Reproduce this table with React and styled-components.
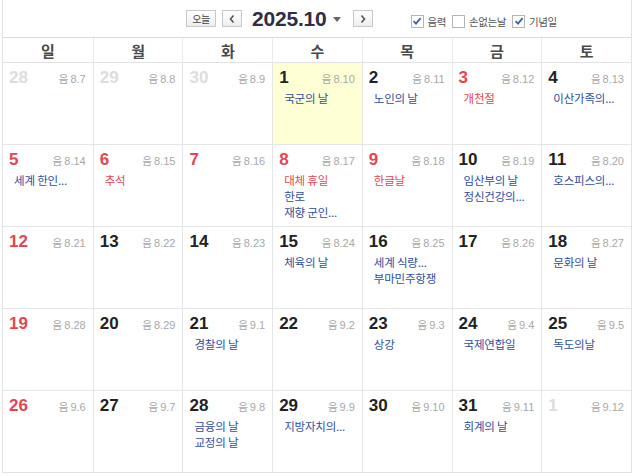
import React from "react";
import styled, { createGlobalStyle } from "styled-components";

const GlobalStyle = createGlobalStyle`
  body {
    margin: 0;
    background: #fff;
    font-family: "Liberation Sans", "Noto Sans CJK KR", Arial, sans-serif;
  }
`;

const weekdays = ["일", "월", "화", "수", "목", "금", "토"];

// tone: dim | red | normal ; today flag ; events [text, red]
const weeks = [
  [
    { d: 28, l: "8.7", tone: "dim" },
    { d: 29, l: "8.8", tone: "dim" },
    { d: 30, l: "8.9", tone: "dim" },
    { d: 1, l: "8.10", today: true, ev: [["국군의 날"]] },
    { d: 2, l: "8.11", ev: [["노인의 날"]] },
    { d: 3, l: "8.12", tone: "red", ev: [["개천절", true]] },
    { d: 4, l: "8.13", ev: [["이산가족의..."]] },
  ],
  [
    { d: 5, l: "8.14", tone: "red", ev: [["세계 한인..."]] },
    { d: 6, l: "8.15", tone: "red", ev: [["추석", true]] },
    { d: 7, l: "8.16", tone: "red" },
    { d: 8, l: "8.17", tone: "red", ev: [["대체 휴일", true], ["한로"], ["재향 군인..."]] },
    { d: 9, l: "8.18", tone: "red", ev: [["한글날", true]] },
    { d: 10, l: "8.19", ev: [["임산부의 날"], ["정신건강의..."]] },
    { d: 11, l: "8.20", ev: [["호스피스의..."]] },
  ],
  [
    { d: 12, l: "8.21", tone: "red" },
    { d: 13, l: "8.22" },
    { d: 14, l: "8.23" },
    { d: 15, l: "8.24", ev: [["체육의 날"]] },
    { d: 16, l: "8.25", ev: [["세계 식량..."], ["부마민주항쟁"]] },
    { d: 17, l: "8.26" },
    { d: 18, l: "8.27", ev: [["문화의 날"]] },
  ],
  [
    { d: 19, l: "8.28", tone: "red" },
    { d: 20, l: "8.29" },
    { d: 21, l: "9.1", ev: [["경찰의 날"]] },
    { d: 22, l: "9.2" },
    { d: 23, l: "9.3", ev: [["상강"]] },
    { d: 24, l: "9.4", ev: [["국제연합일"]] },
    { d: 25, l: "9.5", ev: [["독도의날"]] },
  ],
  [
    { d: 26, l: "9.6", tone: "red" },
    { d: 27, l: "9.7" },
    { d: 28, l: "9.8", ev: [["금융의 날"], ["교정의 날"]] },
    { d: 29, l: "9.9", ev: [["지방자치의..."]] },
    { d: 30, l: "9.10" },
    { d: 31, l: "9.11", ev: [["회계의 날"]] },
    { d: 1, l: "9.12", tone: "dim" },
  ],
];

function Check({ on, label }) {
  return (
    <Option>
      <Box>
        {on && (
          <svg width="10" height="10" viewBox="0 0 10 10">
            <path d="M1.5 5.2 L4 7.6 L8.6 2.2" fill="none" stroke="#3567a8" strokeWidth="1.8" />
          </svg>
        )}
      </Box>
      {label}
    </Option>
  );
}

export default function App() {
  return (
    <Frame>
      <GlobalStyle />
      <TopBar>
        <Nav>
          <SmallBtn>오늘</SmallBtn>
          <ArrowBtn>
            <svg width="8" height="10" viewBox="0 0 8 10">
              <path d="M5.5 1.5 L2.5 5 L5.5 8.5" fill="none" stroke="#555" strokeWidth="1.6" />
            </svg>
          </ArrowBtn>
          <Title>2025.10</Title>
          <Caret />
          <ArrowBtn $next>
            <svg width="8" height="10" viewBox="0 0 8 10">
              <path d="M2.5 1.5 L5.5 5 L2.5 8.5" fill="none" stroke="#555" strokeWidth="1.6" />
            </svg>
          </ArrowBtn>
        </Nav>
        <Options>
          <Check on label="음력" />
          <Check label="손없는날" />
          <Check on label="기념일" />
        </Options>
      </TopBar>
      <Grid>
        {weekdays.map((w) => (
          <DayHead key={w}>{w}</DayHead>
        ))}
        {weeks.flat().map((c, i) => (
          <Cell key={i} $today={c.today}>
            <CellTop>
              <DateNum $tone={c.tone}>{c.d}</DateNum>
              <Lunar>
                <LunarMark>음</LunarMark>
                {c.l}
              </Lunar>
            </CellTop>
            {c.ev && (
              <Events>
                {c.ev.map(([t, red], j) => (
                  <Event key={j} $red={red}>
                    {t}
                  </Event>
                ))}
              </Events>
            )}
          </Cell>
        ))}
      </Grid>
    </Frame>
  );
}

const Frame = styled.div`
  width: 628px;
  margin-left: 2px;
  border-left: 1px solid #e2e2e2;
  border-right: 1px solid #e2e2e2;
`;

const TopBar = styled.div`
  height: 37px;
  display: flex;
  align-items: center;
  border-bottom: 1px solid #dcdcdc;
  padding-left: 183px;
`;

const Nav = styled.div`
  display: flex;
  align-items: center;
`;

const BtnBase = styled.div`
  height: 15px;
  border: 1px solid #c8c8c8;
  background: linear-gradient(#ffffff, #eeeeee);
  display: flex;
  align-items: center;
  justify-content: center;
  box-sizing: content-box;
`;

const SmallBtn = styled(BtnBase)`
  width: 28px;
  font-size: 10px;
  color: #444;
  font-family: "Noto Sans CJK KR", sans-serif;
  letter-spacing: -0.5px;
`;

const ArrowBtn = styled(BtnBase)`
  width: 18px;
  margin-left: ${(p) => (p.$next ? "12px" : "6px")};
`;

const Title = styled.div`
  margin-left: 10px;
  font-size: 21px;
  font-weight: bold;
  color: #2e2e45;
  letter-spacing: -0.2px;
`;

const Caret = styled.div`
  margin-left: 6px;
  margin-top: 2px;
  width: 0;
  height: 0;
  border-left: 4px solid transparent;
  border-right: 4px solid transparent;
  border-top: 5px solid #666;
`;

const Options = styled.div`
  display: flex;
  align-items: center;
  gap: 6px;
  margin-left: 38px;
  margin-top: 5px;
`;

const Option = styled.div`
  display: flex;
  align-items: center;
  gap: 4px;
  font-family: "Noto Sans CJK KR", sans-serif;
  font-size: 10.5px;
  color: #555;
  letter-spacing: -0.4px;
`;

const Box = styled.div`
  width: 11px;
  height: 11px;
  border: 1px solid #b5b5b5;
  background: #fff;
  display: flex;
  align-items: center;
  justify-content: center;
`;

const Grid = styled.div`
  display: grid;
  grid-template-columns: repeat(7, 1fr);
  grid-template-rows: 25px 81px repeat(4, 82px);
  border-bottom: 1px solid #e2e2e2;
`;

const DayHead = styled.div`
  display: flex;
  align-items: center;
  justify-content: center;
  border-bottom: 1px solid #e2e2e2;
  border-left: 1px solid #eaeaea;
  &:first-child {
    border-left: none;
  }
  font-family: "Noto Sans CJK KR", sans-serif;
  font-weight: bold;
  font-size: 15px;
  color: #4a4a4a;
`;

const Cell = styled.div`
  border-left: 1px solid #e6e6e6;
  border-top: 1px solid #e6e6e6;
  &:nth-child(7n + 8) {
    border-left: none;
  }
  &:nth-child(-n + 14) {
    border-top: none;
  }
  background: ${(p) => (p.$today ? "#ffffd5" : "#fff")};
  padding: 6px 6px 0 6px;
  overflow: hidden;
`;

const CellTop = styled.div`
  display: flex;
  justify-content: space-between;
  align-items: center;
  height: 18px;
`;

const toneColor = { dim: "#dddddd", red: "#e5454f" };

const DateNum = styled.span`
  font-size: 17px;
  font-weight: bold;
  color: ${(p) => toneColor[p.$tone] || "#222"};
`;

const Lunar = styled.span`
  font-size: 11px;
  color: #a8a8a8;
  padding-right: 1px;
`;

const LunarMark = styled.span`
  font-family: "Noto Sans CJK KR", sans-serif;
  font-size: 10.5px;
  margin-right: 2px;
`;

const Events = styled.div`
  margin-top: 3px;
  padding-left: 5px;
`;

const Event = styled.div`
  font-family: "Noto Sans CJK KR", sans-serif;
  font-size: 11.5px;
  line-height: 16px;
  color: ${(p) => (p.$red ? "#e5454f" : "#2f4ea0")};
  white-space: nowrap;
  letter-spacing: -0.2px;
`;
